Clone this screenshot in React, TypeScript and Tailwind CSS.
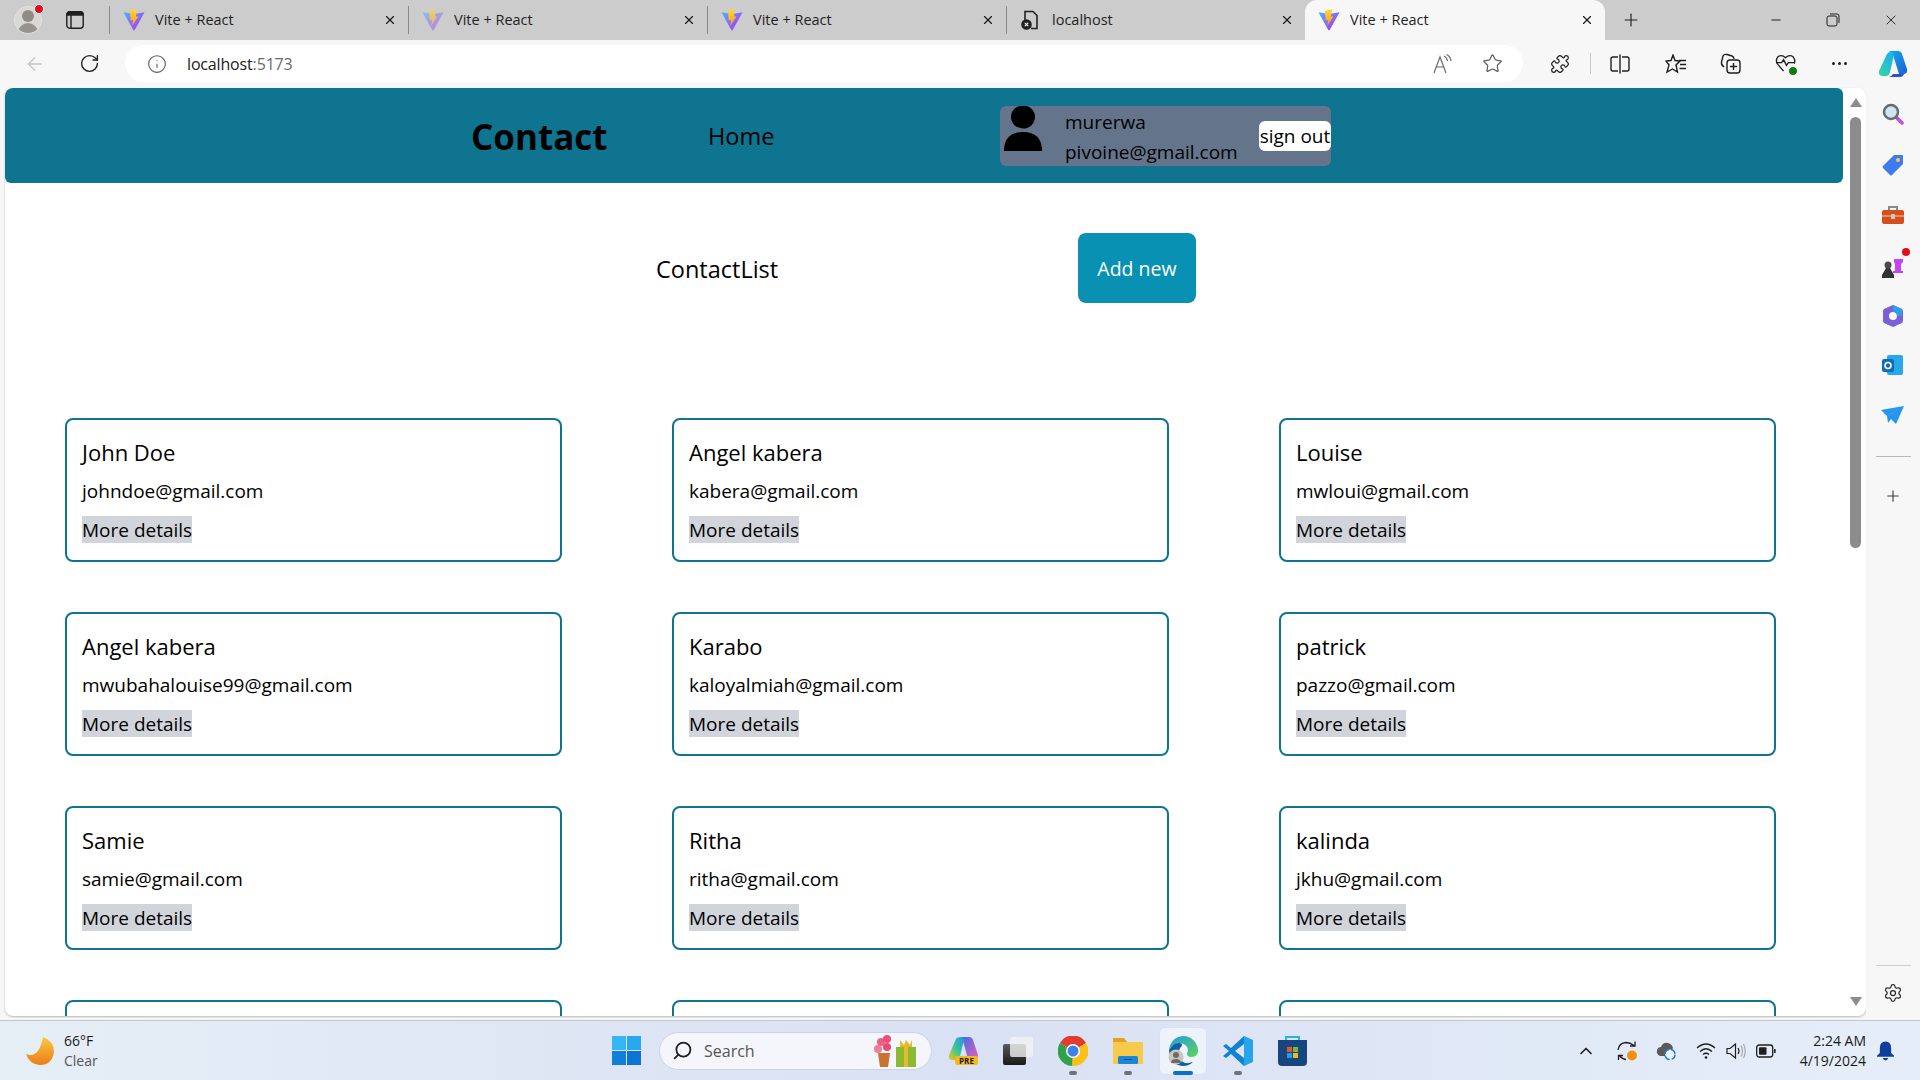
import type { ReactNode } from 'react';
import { ArrowLeft, ChevronUp, Info, Minus, Plus, Puzzle, RotateCw, Search, Settings, Star, X } from 'lucide-react';

const contacts = [
  { name: 'John Doe', email: 'johndoe@gmail.com' },
  { name: 'Angel kabera', email: 'kabera@gmail.com' },
  { name: 'Louise', email: 'mwloui@gmail.com' },
  { name: 'Angel kabera', email: 'mwubahalouise99@gmail.com' },
  { name: 'Karabo', email: 'kaloyalmiah@gmail.com' },
  { name: 'patrick', email: 'pazzo@gmail.com' },
  { name: 'Samie', email: 'samie@gmail.com' },
  { name: 'Ritha', email: 'ritha@gmail.com' },
  { name: 'kalinda', email: 'jkhu@gmail.com' },
];

function ViteLogo({ faded }: { faded?: boolean }) {
  return (
    <svg viewBox="0 0 24 24" className={`w-[22px] h-[22px] shrink-0 ${faded ? 'opacity-50' : ''}`}>
      <defs>
        <linearGradient id="viteBody" x1="0" y1="0" x2="1" y2="1">
          <stop offset="0" stopColor="#41b8ff" />
          <stop offset="0.6" stopColor="#8f5cf6" />
          <stop offset="1" stopColor="#bd34fe" />
        </linearGradient>
        <linearGradient id="viteBolt" x1="0" y1="0" x2="0" y2="1">
          <stop offset="0" stopColor="#ffd62e" />
          <stop offset="1" stopColor="#ff9a1f" />
        </linearGradient>
      </defs>
      <path d="M0.5 3.5 L12 5.5 L23.5 3.5 L12.8 23 Q12 24 11.2 23 Z" fill="url(#viteBody)" />
      <path d="M15.5 0.5 L7.5 2 L8.5 12.5 L11 12 L10 18.5 L17 8 L14 8.5 Z" fill="url(#viteBolt)" />
    </svg>
  );
}

function Tab({ title, faded, local }: { title: string; faded?: boolean; local?: boolean }) {
  return (
    <div className="w-[299px] h-[28px] flex items-center pl-[13px] pr-[11px] border-l border-[#8a8a8a]">
      {local ? (
        <svg viewBox="0 0 22 22" className="w-[22px] h-[22px] shrink-0" fill="none" stroke="#222" strokeWidth="1.6">
          <path d="M5 11 V2.5 H13 L17 6.5 V19.5 H11" />
          <circle cx="6.5" cy="15.5" r="4.5" fill="#222" />
          <path d="M4.8 13.8 L8.2 17.2 M8.2 13.8 L4.8 17.2" stroke="#fff" strokeWidth="1.2" />
        </svg>
      ) : (
        <ViteLogo faded={faded} />
      )}
      <span className="ml-[10px] pb-[1px] flex-1 text-[14.5px] text-[#1f1f1f]">{title}</span>
      <X className="w-[14px] h-[14px] text-[#1a1a1a]" />
    </div>
  );
}

function TabStrip() {
  return (
    <div className="h-[40px] bg-[#cccccc] flex items-end shrink-0">
      <div className="w-[109px] h-[40px] flex items-center shrink-0">
        <div className="relative ml-[14px] w-[28px] h-[28px]">
          <div className="w-[28px] h-[28px] rounded-full bg-[#d9d8d6] overflow-hidden border border-[#e2e2e2]">
            <div className="mx-auto mt-[3px] w-[12px] h-[12px] rounded-full bg-[#8f8c88]" />
            <div className="mx-auto mt-[1px] w-[20px] h-[12px] rounded-t-full bg-[#96938f]" />
          </div>
          <div className="absolute right-[-2px] top-[-2px] w-[10px] h-[10px] rounded-full bg-[#e00b1c] border border-[#f0f0f0]" />
        </div>
        <svg viewBox="0 0 18 18" className="ml-[24px] w-[18px] h-[18px]" fill="none" stroke="#1f1f1f" strokeWidth="1.4">
          <rect x="0.8" y="0.8" width="16.4" height="16.4" rx="3" />
          <path d="M3 1 H15 Q17 1 17 4 H1 Q1 1 3 1 Z" fill="#1f1f1f" />
          <path d="M5 4 V17" />
        </svg>
      </div>
      <div className="h-[40px] flex items-center shrink-0">
        <Tab title="Vite + React" />
        <Tab title="Vite + React" faded />
        <Tab title="Vite + React" />
        <Tab title="localhost" local />
      </div>
      <div className="w-[300px] h-[40px] bg-[#f7f7f7] rounded-t-xl flex items-center pl-[13px] pr-[11px] shrink-0">
        <ViteLogo />
        <span className="ml-[10px] pb-[1px] flex-1 text-[14.5px] text-[#1f1f1f]">Vite + React</span>
        <X className="w-[14px] h-[14px] text-[#1a1a1a]" />
      </div>
      <div className="h-[40px] flex items-center flex-1">
        <Plus className="ml-[16px] w-[20px] h-[20px] text-[#1f1f1f]" strokeWidth={1.4} />
        <Minus className="ml-[128px] w-[14px] h-[14px] text-[#1f1f1f]" />
        <svg viewBox="0 0 14 14" className="ml-[43px] w-[14px] h-[14px]" fill="none" stroke="#1f1f1f">
          <rect x="1" y="3" width="10" height="10" rx="2" />
          <path d="M4 1 H11 Q13 1 13 3 V10" />
        </svg>
        <X className="ml-[43px] w-[16px] h-[16px] text-[#1f1f1f]" strokeWidth={1.4} />
      </div>
    </div>
  );
}

function Toolbar() {
  return (
    <div className="h-[48px] bg-[#f7f7f7] flex items-start pt-[5px] shrink-0">
      <div className="w-[125px] h-[37px] flex items-center shrink-0">
        <ArrowLeft className="ml-[24px] w-[22px] h-[22px] text-[#c4c4c4]" strokeWidth={1.4} />
        <RotateCw className="ml-[33px] w-[21px] h-[21px] text-[#1f1f1f]" strokeWidth={1.6} />
      </div>
      <div className="w-[1398px] h-[37px] rounded-full bg-white flex items-center shrink-0">
        <Info className="ml-[22px] w-[20px] h-[20px] text-[#5a5a5a]" strokeWidth={1.3} />
        <span className="ml-[20px] text-[16px] tracking-[-0.01em] text-[#1a1a1a]">
          localhost<span className="text-[#6b6b6b]">:5173</span>
        </span>
        <svg viewBox="0 0 20 20" className="ml-auto w-[20px] h-[20px]" fill="none" stroke="#6b6b6b" strokeWidth="1.2">
          <path d="M1 19 L7 3 L13 19 M3.5 13 H10.5" />
          <path d="M11 2 Q14 3.5 14.5 7 M13.5 0.5 Q17.5 2.5 18 7" />
        </svg>
        <Star className="ml-[29px] mr-[20px] w-[21px] h-[21px] text-[#5f5f5f]" strokeWidth={1.4} />
      </div>
      <div className="h-[37px] flex items-center flex-1 text-[#1f1f1f]">
        <Puzzle className="ml-[27px] w-[20px] h-[20px]" strokeWidth={1.5} />
        <div className="ml-[20px] w-px h-[21px] bg-[#c8c8c8]" />
        <svg viewBox="0 0 20 20" className="ml-[19px] w-[20px] h-[20px]" fill="none" stroke="#1f1f1f" strokeWidth="1.4">
          <path d="M8 3 H3 Q1 3 1 5 V15 Q1 17 3 17 H8 M12 3 H17 Q19 3 19 5 V15 Q19 17 17 17 H12" />
          <path d="M10 0.5 V19.5" />
        </svg>
        <svg viewBox="0 0 22 20" className="ml-[35px] w-[22px] h-[20px]" fill="none" stroke="#1f1f1f" strokeWidth="1.4">
          <path d="M8 1 L10 6.5 L15 7 L11 11 L12.5 18 L7.5 15 L2 18 L4 11 L1 7 L6 6.5 Z" />
          <path d="M14 6.5 H21 M15 10.5 H21 M14.5 14.5 H21" />
        </svg>
        <svg viewBox="0 0 21 21" className="ml-[33px] w-[21px] h-[21px]" fill="none" stroke="#1f1f1f" strokeWidth="1.4">
          <path d="M4 14 Q1 12 1.5 9 L3 3 Q4 1 7 1.5 L12 3 Q14 4 14 6" />
          <rect x="7" y="7" width="13" height="13" rx="3" />
          <path d="M13.5 10 V17 M10 13.5 H17" />
        </svg>
        <div className="relative ml-[34px] w-[21px] h-[21px]">
          <svg viewBox="0 0 22 22" className="w-[21px] h-[21px]" fill="none" stroke="#1f1f1f" strokeWidth="1.4">
            <path d="M9 19 L3 12 Q0 8 3 4 Q7 1 11 5 Q15 1 19 4 Q22 8 20 11" />
            <path d="M1 10 H7 L9 7 L12 13 L14 10 H21" />
          </svg>
          <div className="absolute right-[-2px] bottom-[-2px] w-[10px] h-[10px] rounded-full bg-[#107c10] border border-white" />
        </div>
        <div className="ml-[36px] w-[15px] flex justify-between">
          <div className="w-[3px] h-[3px] rounded-full bg-[#1f1f1f]" />
          <div className="w-[3px] h-[3px] rounded-full bg-[#1f1f1f]" />
          <div className="w-[3px] h-[3px] rounded-full bg-[#1f1f1f]" />
        </div>
        <svg viewBox="0 0 30 26" className="ml-[31px] w-[30px] h-[26px]">
          <defs>
            <linearGradient id="cpA" x1="0" y1="0" x2="1" y2="1">
              <stop offset="0" stopColor="#19a9e8" />
              <stop offset="1" stopColor="#1b5fd6" />
            </linearGradient>
            <linearGradient id="cpB" x1="0" y1="1" x2="0.6" y2="0">
              <stop offset="0" stopColor="#3ad29f" />
              <stop offset="1" stopColor="#18b6e8" />
            </linearGradient>
          </defs>
          <path d="M12 0 H20 Q23 0 24 3 L29 18 Q30 23 25 23 H21 L15 4 Q14 1 11 1 Z" fill="url(#cpA)" />
          <path d="M9 3 Q10 1 13 1 Q15 1 16 4 L12 21 Q11 25 8 25 H5 Q0 25 1 20 Z" fill="url(#cpB)" />
          <path d="M11 26 H22 Q25 26 26 23 H15 Q13 26 11 26 Z" fill="#2a4fd0" />
        </svg>
      </div>
    </div>
  );
}

function ContactCard({ name, email }: { name?: string; email?: string }) {
  return (
    <div className="h-[144px] border-2 border-[#0e7490] rounded-lg px-[15px] pt-[16px]">
      {name && (
        <>
          <p className="text-[22px] leading-[32px] text-black">{name}</p>
          <p className="mt-[9px] text-[19px] leading-[28px] text-black">{email}</p>
          <button className="block mt-[11px] pt-[1px] bg-[#d1d5db] text-[19px] leading-[26px] text-black">More details</button>
        </>
      )}
    </div>
  );
}

function PageContent() {
  return (
    <div className="flex-1 min-w-0">
      <nav className="h-[95px] bg-[#0e7490] rounded-md flex items-center pl-[466px]">
        <h1 className="w-[237px] pt-[4px] text-[35px] font-bold text-black">Contact</h1>
        <a className="w-[292px] pt-[2px] text-[23.5px] text-black">Home</a>
        <div className="w-[331px] h-[60px] bg-[#64748b] rounded-md flex items-start">
          <svg viewBox="0 0 40 46" className="ml-[3px] w-[40px] h-[46px] shrink-0">
            <ellipse cx="20" cy="11" rx="12" ry="11.5" />
            <path d="M1 45 Q1 26 20 26 Q39 26 39 45 Z" />
          </svg>
          <div className="ml-[22px] w-[194px] text-[19px] leading-[30px] text-black mt-[1px]">
            <p>murerwa</p>
            <p>pivoine@gmail.com</p>
          </div>
          <button className="mt-[15px] w-[72px] h-[30px] bg-white rounded-md text-[19px] leading-[30px] text-black whitespace-nowrap">
            sign out
          </button>
        </div>
      </nav>
      <div className="mt-[50px] pl-[651px] flex items-center">
        <h2 className="w-[422px] pt-[4px] text-[23.5px] text-black">ContactList</h2>
        <button className="w-[118px] h-[70px] pt-[1px] bg-[#0891b2] rounded-lg text-[19.5px] text-white">Add new</button>
      </div>
      <div className="mt-[115px] pl-[60px] grid grid-cols-[repeat(3,497px)] gap-x-[110px] gap-y-[50px]">
        {contacts.map((c) => (
          <ContactCard key={c.email} name={c.name} email={c.email} />
        ))}
        <ContactCard />
        <ContactCard />
        <ContactCard />
      </div>
    </div>
  );
}

function Scrollbar() {
  return (
    <div className="w-[23px] shrink-0 flex flex-col items-center pl-[2px]">
      <div className="mt-[10px] w-0 h-0 border-x-[6px] border-x-transparent border-b-[9px] border-b-[#8c8c8c]" />
      <div className="mt-[10px] w-[11px] h-[431px] rounded-full bg-[#8c8c8c]" />
      <div className="mt-auto mb-[10px] w-0 h-0 border-x-[6px] border-x-transparent border-t-[9px] border-t-[#8c8c8c]" />
    </div>
  );
}

function Sidebar() {
  return (
    <div className="w-[54px] bg-[#f7f7f7] flex flex-col items-center shrink-0">
      <svg viewBox="0 0 22 22" className="mt-[15px] w-[22px] h-[22px]">
        <path d="M13 13 L20 20" stroke="#c64be0" strokeWidth="3.5" strokeLinecap="round" />
        <circle cx="9" cy="9" r="7" fill="#cfe4f5" stroke="#6b6b6b" strokeWidth="2.5" />
      </svg>
      <svg viewBox="0 0 22 22" className="mt-[29px] w-[22px] h-[22px]">
        <path d="M12 1 H20 Q21 1 21 2 V10 L10 21 Q9 22 8 21 L1 14 Q0 13 1 12 Z" fill="#3f7bf0" />
        <circle cx="16" cy="6" r="2" fill="#f7c948" />
      </svg>
      <svg viewBox="0 0 24 20" className="mt-[29px] w-[24px] h-[20px]">
        <path d="M8 5 V2 H16 V5" fill="none" stroke="#8a8a8a" strokeWidth="2" />
        <rect x="1" y="5" width="22" height="14" rx="2" fill="#d2501f" />
        <rect x="1" y="10" width="22" height="2" fill="#f08a5d" />
        <rect x="10" y="9" width="4" height="5" fill="#c9c9c9" />
      </svg>
      <div className="relative mt-[29px] w-[24px] h-[24px]">
        <svg viewBox="0 0 24 24" className="w-[24px] h-[24px]">
          <path d="M13 5 H22 V8 L20 10 V17 H22 V19 H12 V17 H14 V10 L13 8 Z" fill="#c445f0" />
          <circle cx="7" cy="11" r="3.5" fill="#4a4a4a" />
          <path d="M1 24 V21 L5 14 H9 L13 21 V24 Z" fill="#333" />
        </svg>
        <div className="absolute right-[-5px] top-[-6px] w-[8px] h-[8px] rounded-full bg-[#e00b1c]" />
      </div>
      <svg viewBox="0 0 22 24" className="mt-[26px] w-[22px] h-[24px]">
        <path d="M11 1 L20 5 Q21 6 21 8 V16 Q21 18 20 19 L11 23 L2 19 Q1 18 1 16 V8 Q1 6 2 5 Z" fill="#7a5fd6" />
        <circle cx="11" cy="12" r="4" fill="#f7f7f7" />
        <path d="M11 1 L20 5 V12 H15 Q15 8 11 8 Z" fill="#2aa0e6" />
      </svg>
      <svg viewBox="0 0 22 22" className="mt-[26px] w-[22px] h-[22px]">
        <rect x="5" y="1" width="16" height="20" rx="2" fill="#28a8ea" />
        <rect x="0" y="5" width="12" height="13" rx="2" fill="#0f6cbd" />
        <circle cx="6" cy="11.5" r="3" fill="none" stroke="#fff" strokeWidth="1.6" />
      </svg>
      <svg viewBox="0 0 24 18" className="mt-[30px] w-[24px] h-[18px]">
        <path d="M0 4 L23 0 L15 18 L10 13 L7 17 L6 10 Z" fill="#2196f3" />
        <path d="M6 10 L23 0 L10 8 Z" fill="#f5a623" />
      </svg>
      <div className="mt-[32px] w-[35px] h-px bg-[#b8b8b8]" />
      <Plus className="mt-[30px] w-[18px] h-[18px] text-[#3a3a3a]" strokeWidth={1.5} />
      <div className="mt-auto w-[35px] h-px bg-[#d0d0d0]" />
      <Settings className="mt-[17px] mb-[17px] w-[20px] h-[20px] text-[#2a2a2a]" strokeWidth={1.5} />
    </div>
  );
}

function Taskbar() {
  return (
    <div className="h-[60px] border-t border-[#c4c6c9] bg-gradient-to-r from-[#e6eef6] via-[#d9e1f4] to-[#e5eef8] flex items-center shrink-0">
      <svg viewBox="0 0 28 28" className="ml-[26px] w-[28px] h-[28px] shrink-0">
        <defs>
          <linearGradient id="moon" x1="0" y1="0" x2="0" y2="1">
            <stop offset="0" stopColor="#f8c93d" />
            <stop offset="1" stopColor="#ee7c1a" />
          </linearGradient>
        </defs>
        <path d="M17 0 Q28 4 28 15 Q26 28 14 28 Q3 27 0 17 Q13 22 17 0 Z" fill="url(#moon)" />
      </svg>
      <div className="ml-[10px] w-[548px] text-[14px] leading-[20px] shrink-0">
        <p className="text-[#1a1a1a]">66°F</p>
        <p className="text-[#555]">Clear</p>
      </div>
      <svg viewBox="0 0 29 29" className="w-[29px] h-[29px] shrink-0">
        <path d="M0 0 H14 V14 H0 Z" fill="#35b6f3" />
        <path d="M15 0 H29 V14 H15 Z" fill="#29a8ee" />
        <path d="M0 15 H14 V29 H0 Z" fill="#0f7fdb" />
        <path d="M15 15 H29 V29 H15 Z" fill="#0b74d4" />
      </svg>
      <div className="ml-[18px] w-[273px] h-[38px] rounded-full bg-[#f4f6fb] border border-[#ccd3e6] flex items-center shrink-0">
        <Search className="ml-[12px] w-[21px] h-[21px] text-[#1f1f1f] -scale-x-100" strokeWidth={2} />
        <span className="ml-[11px] text-[16px] text-[#555]">Search</span>
        <svg viewBox="0 0 44 32" className="ml-auto mr-[14px] w-[44px] h-[32px]">
          <circle cx="8" cy="7" r="4" fill="#ef5f85" />
          <circle cx="14" cy="4" r="4" fill="#ec4f7a" />
          <circle cx="5" cy="14" r="4" fill="#f27a9a" />
          <circle cx="14" cy="12" r="4" fill="#e94a75" />
          <path d="M5 18 H17 L15 32 H7 Z" fill="#c9742e" />
          <rect x="23" y="12" width="20" height="20" fill="#8bb92f" />
          <rect x="31" y="12" width="4" height="20" fill="#e8b92e" />
          <path d="M27 12 V5 L31 10 L33 5 L37 10 L39 5 V12 Z" fill="#e8b92e" />
        </svg>
      </div>
      <div className="relative ml-[16px] w-[30px] h-[28px] shrink-0">
        <svg viewBox="0 0 30 24" className="w-[30px] h-[24px]">
          <defs>
            <linearGradient id="preA" x1="0" y1="1" x2="1" y2="0">
              <stop offset="0" stopColor="#f5c518" />
              <stop offset="0.5" stopColor="#35c69a" />
              <stop offset="1" stopColor="#2a8fe8" />
            </linearGradient>
            <linearGradient id="preB" x1="0" y1="0" x2="1" y2="1">
              <stop offset="0" stopColor="#3a6fe8" />
              <stop offset="1" stopColor="#e85fb8" />
            </linearGradient>
          </defs>
          <path d="M13 0 H21 Q24 0 25 3 L30 18 Q30 22 26 22 H20 L15 4 Z" fill="url(#preB)" />
          <path d="M8 2 Q9 0 13 0 Q15 0 16 3 L12 19 Q11 23 7 23 H4 Q0 23 1 18 Z" fill="url(#preA)" />
        </svg>
        <div className="absolute left-[7px] bottom-0 w-[23px] h-[9px] rounded-[2px] bg-[#f5b91c] text-[8px] leading-[9px] font-bold text-center text-[#222]">
          PRE
        </div>
      </div>
      <div className="relative ml-[25px] w-[30px] h-[28px] shrink-0">
        <div className="absolute left-0 top-[7px] w-[23px] h-[21px] rounded-[2px] bg-gradient-to-b from-[#5a5a5a] to-[#1a1a1a]" />
        <div className="absolute left-[7px] top-0 w-[23px] h-[20px] rounded-[2px] bg-[#f2f2f2]/80" />
      </div>
      <AppIcon dot className="ml-[25px]">
        <svg viewBox="0 0 30 30" className="w-[30px] h-[30px]">
          <path d="M15 15 L2 7 A15 15 0 0 1 28 7 Z" fill="#e33b2e" />
          <path d="M15 15 L28 7 A15 15 0 0 1 14 30 Z" fill="#fbc116" />
          <path d="M15 15 L14 30 A15 15 0 0 1 2 7 Z" fill="#30a24e" />
          <circle cx="15" cy="15" r="7" fill="#fff" />
          <circle cx="15" cy="15" r="5.5" fill="#3f7fe8" />
        </svg>
      </AppIcon>
      <AppIcon dot className="ml-[25px]">
        <svg viewBox="0 0 30 28" className="w-[30px] h-[28px]">
          <path d="M0 1 H11 L14 5 H30 V27 H0 Z" fill="#f6cb4b" />
          <path d="M0 1 H11 L14 5 H0 Z" fill="#e0a422" />
          <rect x="5" y="19" width="20" height="8" rx="1.5" fill="#1a86d8" />
          <rect x="11" y="22" width="8" height="1" fill="#0c4f8f" />
        </svg>
      </AppIcon>
      <div className="relative ml-[16px] w-[48px] h-[48px] rounded-md bg-[#eef2fb] border border-[#dbe1ef] flex items-center justify-center shrink-0">
        <svg viewBox="0 0 30 30" className="w-[30px] h-[30px]">
          <defs>
            <linearGradient id="edge" x1="0" y1="0" x2="1" y2="1">
              <stop offset="0" stopColor="#1f9de0" />
              <stop offset="1" stopColor="#5fd35a" />
            </linearGradient>
          </defs>
          <path d="M15 0 A15 15 0 0 1 30 16 Q29 21 23 21 Q17 20 20 15 Q20 8 12 7 Q4 8 1 14 Q3 1 15 0 Z" fill="url(#edge)" />
          <path d="M1 14 Q6 6 12 7 Q16 8 12 12 Q9 18 13 24 Q16 29 25 26 Q21 30 15 30 Q2 29 1 14 Z" fill="#0c5fa8" />
          <circle cx="8" cy="21" r="7.5" fill="#c9c6c2" />
          <circle cx="8" cy="19" r="3" fill="#6e6b67" />
          <path d="M3 27 Q3 23 8 23 Q13 23 13 27 Z" fill="#6e6b67" />
        </svg>
        <div className="absolute bottom-[-1px] left-[13px] w-[20px] h-[4px] rounded-full bg-[#0a6fd1]" />
      </div>
      <AppIcon dot className="ml-[16px]">
        <svg viewBox="0 0 30 30" className="w-[30px] h-[30px]">
          <path d="M21 0 L8 12 L3 8 L0 10 L6 15 L0 20 L3 22 L8 18 L21 30 Z M21 8 V22 L12 15 Z" fill="#0f82d2" fillRule="evenodd" />
          <path d="M21 0 L30 4 V26 L21 30 Z" fill="#27a5ea" />
        </svg>
      </AppIcon>
      <AppIcon className="ml-[25px]">
        <svg viewBox="0 0 30 30" className="w-[30px] h-[30px]">
          <path d="M8 5 V1 H21 V5" fill="none" stroke="#2bb0e8" strokeWidth="2" />
          <path d="M0 4 H29 V26 Q29 30 25 30 H4 Q0 30 0 26 Z" fill="#17467f" />
          <rect x="9" y="11" width="5" height="5" fill="#e8532b" />
          <rect x="15" y="11" width="5" height="5" fill="#7cb82f" />
          <rect x="9" y="17" width="5" height="5" fill="#18a0e8" />
          <rect x="15" y="17" width="5" height="5" fill="#f5b81c" />
        </svg>
      </AppIcon>
      <ChevronUp className="ml-[268px] w-[20px] h-[20px] text-[#1f1f1f] shrink-0" />
      <svg viewBox="0 0 20 20" className="ml-[21px] w-[20px] h-[20px] shrink-0" fill="none" stroke="#1f1f1f" strokeWidth="1.3">
        <path d="M1 9 Q2 2 9 1.5 Q13 1.5 17 4.5 M18 0.5 V5 H13" />
        <path d="M2 14 Q5 18 9 18.5 M1.5 19 V14.5 H6" />
        <circle cx="15" cy="14.5" r="5" fill="#f79009" stroke="none" />
      </svg>
      <svg viewBox="0 0 20 20" className="ml-[19px] w-[20px] h-[20px] shrink-0">
        <path d="M4 15 Q0 13 1 9 Q2 6 5 6 Q7 1 12 2 Q16 3 17 7 L12 15 Z" fill="#5a5a5a" />
        <circle cx="14" cy="13.5" r="5" fill="#eef3fa" stroke="#1a7fd8" strokeWidth="1.5" strokeDasharray="6 2" />
      </svg>
      <svg viewBox="0 0 20 20" className="ml-[20px] w-[20px] h-[20px] shrink-0" fill="none" stroke="#1f1f1f" strokeWidth="1.3">
        <path d="M1 7 Q10 -1 19 7 M4 10.5 Q10 5 16 10.5 M7 13.5 Q10 11 13 13.5" />
        <circle cx="10" cy="16.5" r="1.3" fill="#1f1f1f" stroke="none" />
      </svg>
      <svg viewBox="0 0 20 20" className="ml-[10px] w-[20px] h-[20px] shrink-0" fill="none" strokeWidth="1.2">
        <path d="M1 7.5 H4 L9.5 3 V17 L4 12.5 H1 Z" stroke="#1f1f1f" />
        <path d="M12 7 Q14 10 12 13" stroke="#1f1f1f" />
        <path d="M15 4.5 Q18 10 15 15.5 M17.5 3 Q21 10 17.5 17" stroke="#a8a8a8" />
      </svg>
      <svg viewBox="0 0 20 14" className="ml-[10px] w-[20px] h-[14px] shrink-0" fill="none" stroke="#1f1f1f" strokeWidth="1.3">
        <rect x="0.7" y="1" width="16" height="12" rx="2.5" />
        <rect x="3" y="3.2" width="7.5" height="7.6" rx="1" fill="#1f1f1f" stroke="none" />
        <path d="M18.8 5 V9" strokeWidth="1.6" />
      </svg>
      <div className="w-[90px] text-right text-[14px] leading-[20px] text-[#1a1a1a] shrink-0 whitespace-nowrap">
        <p>2:24 AM</p>
        <p>4/19/2024</p>
      </div>
      <svg viewBox="0 0 18 20" className="ml-[11px] w-[17px] h-[20px] shrink-0" fill="#0f3f9c">
        <path d="M9 0 Q15 0 15 7 V12 L18 15 V16 H0 V15 L3 12 V7 Q3 0 9 0 Z" />
        <path d="M6 17.5 H12 Q11 20 9 20 Q7 20 6 17.5 Z" />
      </svg>
    </div>
  );
}

function AppIcon({ children, dot, className }: { children: ReactNode; dot?: boolean; className?: string }) {
  return (
    <div className={`relative w-[30px] h-[30px] flex items-center justify-center shrink-0 ${className}`}>
      {children}
      {dot && <div className="absolute bottom-[-9px] left-[11px] w-[8px] h-[4px] rounded-full bg-[#6f7378]" />}
    </div>
  );
}

export default function App() {
  return (
    <div className="w-[1920px] h-[1080px] flex flex-col overflow-hidden bg-[#f7f7f7] font-['Open_Sans','Noto_Sans',sans-serif]">
      <TabStrip />
      <Toolbar />
      <div className="flex-1 min-h-0 flex">
        <div className="ml-[5px] flex-1 min-w-0 h-[928px] bg-white rounded-lg overflow-hidden flex shadow-[0_1px_2px_rgba(0,0,0,0.25)]">
          <PageContent />
          <Scrollbar />
        </div>
        <Sidebar />
      </div>
      <Taskbar />
    </div>
  );
}
